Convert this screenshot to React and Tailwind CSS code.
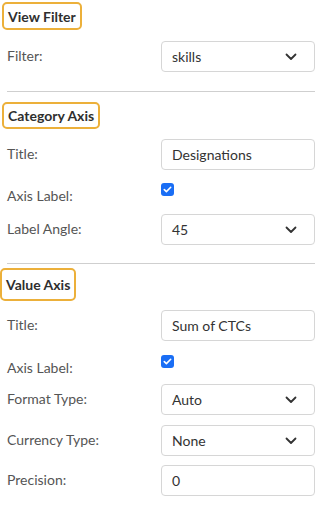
import React from "react";

const Chevron = () => (
  <svg width="12" height="8" viewBox="0 0 12 8" fill="none" className="shrink-0">
    <path d="M1.5 1.5 L6 6 L10.5 1.5" stroke="#333" strokeWidth="1.8" strokeLinecap="round" strokeLinejoin="round" />
  </svg>
);

function Header({ children, className }) {
  return (
    <div className={`ml-[-5px] self-start flex items-center border-2 border-[#ecb03a] rounded-[5px] px-[4px] text-[14px] font-bold text-[#2f2f2f] ${className}`}>
      {children}
    </div>
  );
}

function Row({ label, children, className = "" }) {
  return (
    <div className={`flex items-center h-[31px] ${className}`}>
      <div className="w-[154px] text-[14px] text-[#555] -mt-[2px]">{label}</div>
      {children}
    </div>
  );
}

function Input({ value }) {
  return (
    <div className="flex-1 h-[31px] border border-[#d6d6d6] rounded-[4px] flex items-center pl-[10px] text-[14px] text-[#333]">
      {value}
    </div>
  );
}

function Select({ value }) {
  return (
    <div className="flex-1 h-[31px] border border-[#d6d6d6] rounded-[4px] flex items-center justify-between pl-[10px] pr-[17px] text-[14px] text-[#333]">
      <span>{value}</span>
      <Chevron />
    </div>
  );
}

function Check({ className = "" }) {
  return (
    <div className={`flex items-start h-[20px] ${className}`}>
      <div className="w-[154px] text-[14px] text-[#555] mt-[4px] leading-[17px]">Axis Label:</div>
      <div className="w-[13px] h-[13px] rounded-[3px] bg-[#1a6ef5] flex items-center justify-center">
        <svg width="9" height="7" viewBox="0 0 9 7" fill="none">
          <path d="M1.3 3.6 L3.4 5.6 L7.7 1.3" stroke="#fff" strokeWidth="1.6" strokeLinecap="round" strokeLinejoin="round" />
        </svg>
      </div>
    </div>
  );
}

export default function App() {
  return (
    <div className="w-[323px] h-[508px] bg-white pl-[7px] pr-[8px] pt-[2px] flex flex-col" style={{ fontFamily: "Lato, 'Noto Sans', sans-serif" }}>
      <Header className="h-[28px]">View Filter</Header>
      <Row label="Filter:" className="mt-[11px]">
        <Select value="skills" />
      </Row>
      <div className="h-px bg-[#cfcfcf] mt-[19px]"></div>

      <Header className="h-[27px] mt-[10px]">Category Axis</Header>
      <Row label="Title:" className="mt-[10px]">
        <Input value="Designations" />
      </Row>
      <Check className="mt-[13px]" />
      <Row label="Label Angle:" className="mt-[11px]">
        <Select value="45" />
      </Row>
      <div className="h-px bg-[#cfcfcf] mt-[18px]"></div>

      <Header className="h-[33px] mt-[4px] ml-[-7px]">Value Axis</Header>
      <Row label="Title:" className="mt-[9px]">
        <Input value="Sum of CTCs" />
      </Row>
      <Check className="mt-[14px]" />
      <Row label="Format Type:" className="mt-[9px]">
        <Select value="Auto" />
      </Row>
      <Row label="Currency Type:" className="mt-[10px]">
        <Select value="None" />
      </Row>
      <Row label="Precision:" className="mt-[9px]">
        <Input value="0" />
      </Row>
    </div>
  );
}
